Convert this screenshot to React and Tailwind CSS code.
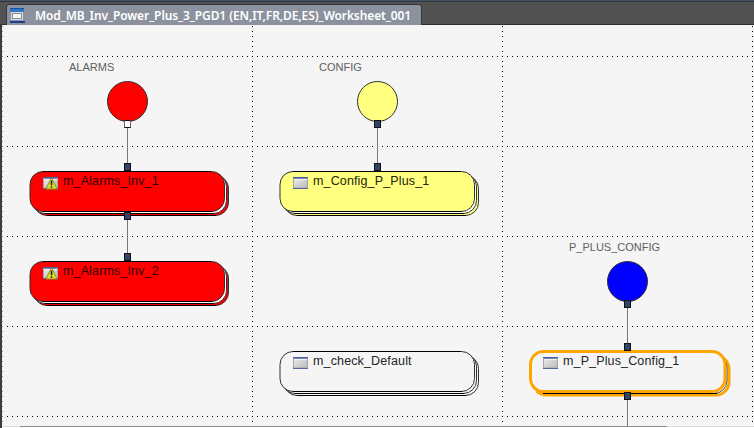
const nodes = [
  { x: 29, y: 171, label: "m_Alarms_Inv_1", kind: "alarm" },
  { x: 29, y: 261, label: "m_Alarms_Inv_2", kind: "alarm" },
  { x: 279, y: 171, label: "m_Config_P_Plus_1", kind: "config" },
  { x: 279, y: 351, label: "m_check_Default", kind: "plain" },
  { x: 529, y: 351, label: "m_P_Plus_Config_1", kind: "selected" },
];

const starts = [
  { x: 107, y: 81, label: "ALARMS", color: "bg-[#ff0000]" },
  { x: 357, y: 81, label: "CONFIG", color: "bg-[#ffff80]" },
  { x: 607, y: 261, label: "P_PLUS_CONFIG", color: "bg-[#0000ff]" },
];

const links = [
  { x: 127, y: 122, h: 45 },
  { x: 127, y: 216, h: 41 },
  { x: 377, y: 122, h: 45 },
  { x: 627, y: 302, h: 45 },
  { x: 627, y: 397, h: 29 },
];

const ports = [
  { x: 124, y: 120, open: true },
  { x: 124, y: 163 },
  { x: 124, y: 212 },
  { x: 124, y: 253 },
  { x: 374, y: 120 },
  { x: 374, y: 163 },
  { x: 624, y: 300 },
  { x: 624, y: 343 },
  { x: 624, y: 392 },
];

const fills = {
  alarm: ["#ff0000", "#ffffff", "#ff0000"],
  config: ["#ffff80", "#ffffff", "#ffff80"],
  plain: ["#f5f5f5", "#f5f5f5", "#f5f5f5"],
  selected: ["#f5f5f5", "#f5f5f5", "#f5f5f5"],
};

function MaskIcon({ warning }) {
  return (
    <svg className="absolute left-[14px] top-[6px]" width="16" height="14" viewBox="0 0 16 14">
      <defs>
        <linearGradient id="pane" x1="0" y1="0" x2="1" y2="1">
          <stop offset="0" stopColor="#f0f0f0" />
          <stop offset="1" stopColor="#b8b8b8" />
        </linearGradient>
      </defs>
      <rect x="0.5" y="0.5" width="14" height="10.5" fill="url(#pane)" stroke="#a4a4ac" />
      <rect x="0" y="0" width="15" height="1" fill="#4a5f9e" />
      <rect x="1" y="1" width="13" height="1" fill="#7484b8" />
      <rect x="1" y="2" width="13" height="1" fill="#f4f4f4" />
      <rect x="0" y="11" width="15" height="1" fill="#59679a" />
      {warning && (
        <g>
          <path d="M8.5 0.8 L14.2 12 H2.8 Z" fill="#dede35" stroke="#8d8b20" strokeLinejoin="round" />
          <path d="M8.5 3.6 V8.2" stroke="#22220c" strokeWidth="1.6" />
          <rect x="7.7" y="9.2" width="1.6" height="1.5" fill="#22220c" />
        </g>
      )}
    </svg>
  );
}

function Stack({ kind }) {
  const [front, middle, back] = fills[kind];
  return (
    <svg className="absolute left-[-2px] top-[-2px]" width="206" height="50" viewBox="-2 -2 206 50" fill="none">
      {kind === "selected" ? (
        <g>
          <rect x="5" y="5" width="195" height="39" rx="13" fill={back} stroke="#ffa500" strokeWidth="3" />
          <rect x="3" y="3" width="195" height="39.5" rx="13" fill={middle} stroke="#555" strokeWidth="1" />
          <path d="M8 40.5 Q11 43.5 17 43.5 H180" stroke="#ffa500" strokeWidth="3" />
          <rect x="1.5" y="0.5" width="194.5" height="40" rx="13" fill={front} stroke="#ffa500" strokeWidth="3" />
          <path d="M14 42.5 H188" stroke="#000" />
        </g>
      ) : (
        <g stroke="#303030" strokeWidth="1">
          <rect x="5" y="4.5" width="194.5" height="40" rx="13" fill={back} />
          <rect x="3" y="2.5" width="194.5" height="40" rx="13" fill={middle} />
          <rect x="1" y="0.5" width="194.5" height="40" rx="13" fill={front} />
          <path d="M14 0.5 H182 M14 40.5 H183 M16 42.5 H185 M18 44.5 H187" stroke="#000" />
        </g>
      )}
    </svg>
  );
}

function Node({ node }) {
  return (
    <div className="absolute h-[46px] w-[202px]" style={{ left: node.x, top: node.y }}>
      <Stack kind={node.kind} />
      <MaskIcon warning={node.kind === "alarm"} />
      <span
        className={`absolute left-[34px] top-[2px] whitespace-nowrap text-[12.5px] leading-4 tracking-[0.14px] ${
          node.kind === "alarm" ? "text-[#300000]" : node.kind === "config" ? "text-[#242408]" : "text-[#242424]"
        }`}
      >
        {node.label}
      </span>
    </div>
  );
}

function Start({ start }) {
  return (
    <div className="absolute size-[41px]" style={{ left: start.x, top: start.y }}>
      <span className="absolute left-[-38px] top-[-21px] whitespace-nowrap text-[11px] leading-[14px] text-[#606060]">
        {start.label}
      </span>
      <div className={`size-[41px] rounded-full border border-[#303030] ${start.color}`} />
    </div>
  );
}

function Grid() {
  return (
    <svg className="absolute inset-0" width="754" height="428" shapeRendering="crispEdges">
      {[56, 146, 236, 326, 416].map((y) => (
        <path key={y} d={`M7 ${y + 0.5} H754`} stroke="#000" strokeDasharray="1 4" />
      ))}
      {[2, 252, 502, 752].map((x) => (
        <path key={x} d={`M${x + 0.5} 26 V426`} stroke={x === 2 ? "#999" : "#000"} strokeDasharray="1 4" />
      ))}
    </svg>
  );
}

function TabIcon() {
  return (
    <svg width="16" height="16" viewBox="0 0 16 16" className="mt-px shrink-0">
      <rect x="0" y="0" width="14" height="4" fill="#2e78c8" />
      <rect x="0" y="0" width="14" height="1" fill="#174e9d" />
      <rect x="1" y="4" width="12" height="8" fill="#858a98" />
      <rect x="1.5" y="4.5" width="11" height="7" fill="#eeeeea" stroke="#d8dce4" />
      <rect x="2.5" y="5.5" width="9" height="5" fill="#f8f8f5" stroke="#8a8a8a" />
      <rect x="0" y="12" width="15" height="3" fill="#233f83" />
      <rect x="0" y="12" width="15" height="1" fill="#7f93bd" />
    </svg>
  );
}

export default function App() {
  return (
    <div className="relative flex h-[428px] w-[754px] flex-col overflow-hidden bg-[#f5f5f5] font-['Liberation_Sans',sans-serif]">
      <header className="flex h-[25px] shrink-0 items-end border-t border-[#46515f] bg-[#525252] shadow-[inset_0_1px_0_#303741,inset_0_-1px_0_#342f31]">
        <div className="ml-[6px] flex h-[21px] w-[416px] items-center rounded-t-[3px] border-x border-t border-[#33373d] bg-[#8b929d] pl-[3px] font-['Noto_Sans',sans-serif] text-[12px] font-semibold text-white">
          <TabIcon />
          <span className="ml-[9px] mt-[2px] whitespace-nowrap leading-[18px] tracking-[-0.1px]">
            Mod_MB_Inv_Power_Plus_3_PGD1 (EN,IT,FR,DE,ES)_Worksheet_001
          </span>
        </div>
      </header>
      <main className="min-h-0 flex-1 border-l-2 border-[#3c3d40]" />
      <footer className="flex h-[2px] shrink-0 flex-col border-l-2 border-[#3c3d40]">
        <div className="flex h-px bg-[#dcdcdc]">
          <div className="ml-[18px] w-[647px] bg-[#8d8d8d]" />
        </div>
        <div className="h-px bg-white" />
      </footer>
      <Grid />
      {starts.map((start) => (
        <Start key={start.label} start={start} />
      ))}
      {nodes.map((node) => (
        <Node key={node.label} node={node} />
      ))}
      {links.map((link) => (
        <div key={`${link.x}-${link.y}`} className="absolute w-px bg-[#777]" style={{ left: link.x, top: link.y, height: link.h }} />
      ))}
      {ports.map((port) => (
        <div
          key={`${port.x}-${port.y}`}
          className={`absolute h-[8px] w-[7px] border border-[#111] ${port.open ? "border-x-[#666] bg-white" : "bg-[#304469]"}`}
          style={{ left: port.x, top: port.y }}
        />
      ))}
    </div>
  );
}
